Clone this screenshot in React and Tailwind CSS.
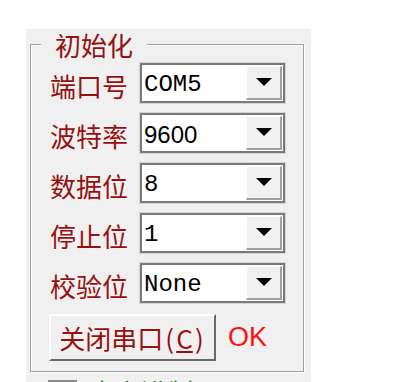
import React from 'react';

const CJK = { fontFamily: '"Noto Sans CJK SC", "Noto Sans", sans-serif' };

const rows = [
  { label: '端口号', value: 'COM5' },
  { label: '波特率', value: '9600', sans: true },
  { label: '数据位', value: '8' },
  { label: '停止位', value: '1' },
  { label: '校验位', value: 'None' },
];

const Combo = ({ value, sans }) => (
  <div className="w-[145px] h-[40px] flex border-2 border-[#7a7a7a] shadow-[0_0_0_1px_#d4d4d4] bg-white">
    <div
      className={`flex-1 flex items-center pl-[2px] pt-[4px] text-[24px] leading-none text-black ${sans ? "font-['Liberation_Sans']" : "font-['Liberation_Mono']"}`}
    >
      {value}
    </div>
    <div className="w-[36px] my-[1px] mr-[1px] flex items-center justify-center bg-[#f0f0f0] border-l border-t border-white border-r-2 border-b-2 border-r-[#a0a0a0] border-b-[#a0a0a0]">
      <svg width="16" height="9" viewBox="0 0 16 9">
        <polygon points="0,0 16,0 8,8" fill="#000" />
      </svg>
    </div>
  </div>
);

export default function App() {
  return (
    <div className="w-[410px] h-[382px] overflow-hidden bg-white pl-[26px] pt-[29px]">
      <div className="w-[285px] h-[400px] bg-[#f0f0f0] pl-[4px] pt-[15px]">
        {/* 初始化 group */}
        <div className="relative w-[274px] h-[328px] border border-[#a0a0a0] shadow-[inset_1px_1px_0_#fff,1px_1px_0_#fff] pt-[18px] pl-[18px]">
          <div
            className="absolute left-[10px] -top-[13px] px-[14px] bg-[#f0f0f0] text-[26px] leading-none text-[#961010]"
            style={CJK}
          >
            初始化
          </div>

          <div className="flex flex-col gap-[10px]">
            {rows.map((r) => (
              <div key={r.label} className="flex items-center h-[40px]">
                <div
                  className="w-[91px] pl-[1px] pt-[6px] text-[26px] leading-none text-[#961010]"
                  style={CJK}
                >
                  {r.label}
                </div>
                <Combo value={r.value} sans={r.sans} />
              </div>
            ))}
          </div>

          <div className="flex items-center mt-[11px]">
            <button
              className="w-[167px] h-[47px] flex items-center justify-center bg-[#f0f0f0] border-l-2 border-t-2 border-white border-r-2 border-b-2 border-r-[#696969] border-b-[#696969] text-[26px] leading-none text-[#961010]"
              style={CJK}
            >
              关闭串口
              <span className="inline-block w-[13px] text-center">(</span>
              <span className="underline underline-offset-2">C</span>
              <span className="inline-block w-[13px] text-center">)</span>
            </button>
            <span className="ml-[12px] text-[27px] leading-none text-[#ff1010] font-['Liberation_Sans']">
              OK
            </span>
          </div>
        </div>

        {/* next row, cut off */}
        <div className="flex items-start mt-[8px] pl-[18px]">
          <div className="w-[29px] h-[29px] border-2 border-[#8a8a8a] bg-white" />
          <span className="ml-[12px] -mt-[1px] text-[26px] leading-none text-[#008000]" style={CJK}>
            十六进制
          </span>
        </div>
      </div>
    </div>
  );
}
